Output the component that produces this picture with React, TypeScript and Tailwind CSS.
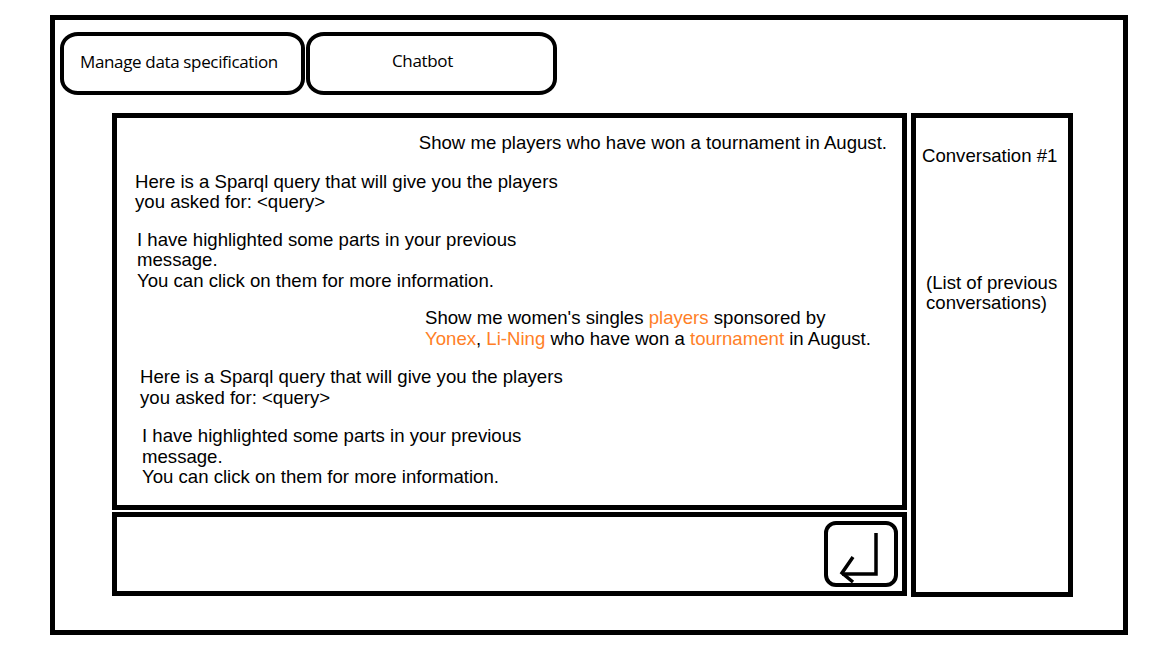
import React from "react";

const O = ({ children }: { children: React.ReactNode }) => (
  <span className="text-[#ff7f27]">{children}</span>
);

export default function App() {
  return (
    <div className="w-[1152px] h-[648px] bg-white pl-[50px] pt-[15px] font-['Liberation_Sans',Arial,sans-serif] text-black">
      <div className="w-[1078px] h-[620px] border-[5px] border-black flex flex-col">
        {/* tabs */}
        <div className="flex pl-[5px] pt-[12px] gap-[1px]">
          <div className="w-[245px] h-[63px] border-[4px] border-black rounded-[18px/16px] flex items-center pl-[16px] pb-[4px] text-[17px] font-['Open_Sans',sans-serif] tracking-[-0.35px]">
            Manage data specification
          </div>
          <div className="w-[251px] h-[63px] border-[4px] border-black rounded-[18px/16px] flex items-center pl-[82px] pb-[6px] text-[17px] font-['Open_Sans',sans-serif] tracking-[-0.35px]">
            Chatbot
          </div>
        </div>

        {/* main */}
        <div className="flex pl-[57px] pt-[18px] gap-[4px]">
          <div className="flex flex-col gap-[2px]">
            <div className="w-[795px] h-[397px] border-[5px] border-black text-[18.6px] leading-[20.5px] pt-[15px]">
              <div className="text-right pr-[15px]">
                Show me players who have won a tournament in August.
              </div>
              <div className="ml-[18px] mt-[18px]">
                Here is a Sparql query that will give you the players
                <br />
                you asked for: &lt;query&gt;
              </div>
              <div className="ml-[20px] mt-[17px]">
                I have highlighted some parts in your previous
                <br />
                message.
                <br />
                You can click on them for more information.
              </div>
              <div className="ml-[308px] mt-[17px]">
                Show me women's singles <O>players</O> sponsored by
                <br />
                <O>Yonex</O>, <O>Li-Ning</O> who have won a <O>tournament</O> in August.
              </div>
              <div className="ml-[23px] mt-[18px]">
                Here is a Sparql query that will give you the players
                <br />
                you asked for: &lt;query&gt;
              </div>
              <div className="ml-[25px] mt-[18px]">
                I have highlighted some parts in your previous
                <br />
                message.
                <br />
                You can click on them for more information.
              </div>
            </div>
            <div className="w-[795px] h-[84px] border-[5px] border-black flex justify-end items-start pt-[4px] pr-[4px]">
              <div className="w-[74px] h-[66px] border-[4px] border-black rounded-[12px]">
                <svg width="66" height="58" viewBox="0 0 66 58" fill="none">
                  <path
                    d="M48 8 V49 H14"
                    stroke="black"
                    strokeWidth="3.5"
                    strokeLinejoin="miter"
                  />
                  <path
                    d="M25 32 L14 48 L25 57"
                    stroke="black"
                    strokeWidth="3.5"
                    strokeLinejoin="miter"
                  />
                </svg>
              </div>
            </div>
          </div>
          <div className="w-[162px] h-[484px] border-[5px] border-black text-[18.6px] leading-[20.5px] pt-[28px]">
            <div className="pl-[6px]">Conversation #1</div>
            <div className="pl-[10px] mt-[106px]">
              (List of previous
              <br />
              conversations)
            </div>
          </div>
        </div>
      </div>
    </div>
  );
}
